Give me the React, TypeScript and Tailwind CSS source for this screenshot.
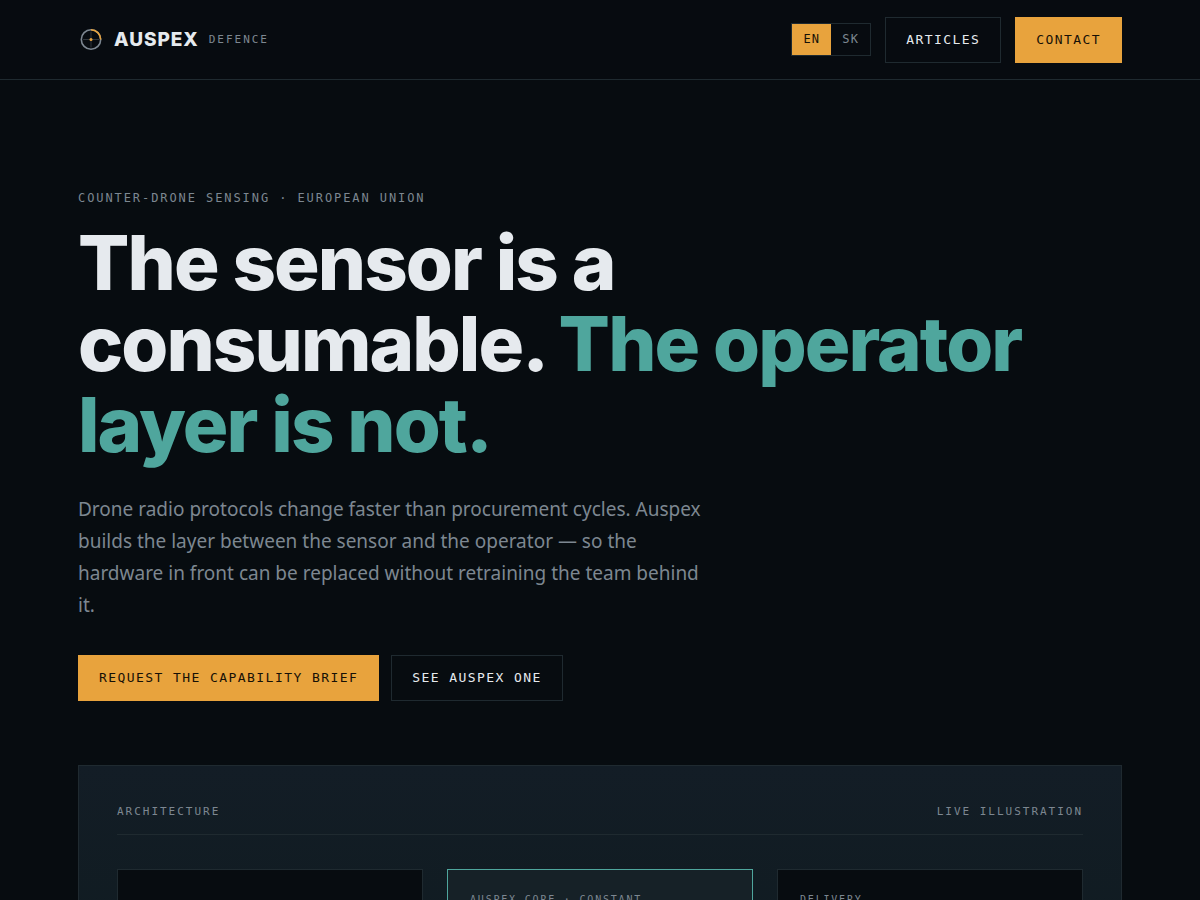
const card = "min-h-60 border px-[22px] pt-[22px]";
const cta = "inline-flex items-center border px-5 py-[13px] text-[13px] leading-[18px] tracking-[0.11em] uppercase";
const label = "text-[11px] leading-4 tracking-[0.18em] uppercase";

function Logo() {
  return (
    <svg viewBox="0 0 26 26" className="size-[26px]" fill="none" aria-hidden="true">
      <circle cx="13" cy="12.5" r="9.7" stroke="#7d8791" strokeWidth="1.6" />
      <path d="M13 4.5V20.5M5 12.5H21" stroke="#7d8791" strokeWidth="0.7" opacity="0.5" />
      <path d="M13 2.8A9.7 9.7 0 0 1 22.7 12.5" stroke="#e8a33d" strokeWidth="1.6" />
      <circle cx="13" cy="12.5" r="1.5" fill="#e8a33d" />
    </svg>
  );
}

export default function App() {
  return (
    <div className="h-screen overflow-x-hidden overflow-y-auto bg-[#070c10] font-['DejaVu_Sans_Mono',monospace] text-[#e6eaee]">
      <header className="border-b border-[#1f2a30] bg-[#070b10] px-[6.5vw] py-4">
        <div className="flex min-h-[47px] items-center justify-between">
          <a href="#top" className="flex items-center gap-[10px]">
            <Logo />
            <span className="font-['Inter',sans-serif] text-[19px] leading-6 font-extrabold tracking-wider">AUSPEX</span>
            <span className="text-[11px] leading-4 tracking-[0.18em] text-[#7d8791]">DEFENCE</span>
          </a>
          <nav className="flex items-center gap-[14px]">
            <div className="flex border border-[#1f2a30] text-[12px] leading-[15px] tracking-widest">
              <button type="button" className="bg-[#e8a33d] px-[11px] py-2 text-[#161006]">EN</button>
              <button type="button" className="px-[11px] py-2 text-[#7d8791]">SK</button>
            </div>
            <a href="#articles" className={`${cta} border-[#1f2a30]`}>Articles</a>
            <a href="#contact" className={`${cta} border-[#e8a33d] bg-[#e8a33d] text-[#161006]`}>Contact</a>
          </nav>
        </div>
      </header>
      <main id="top" className="px-[6.5vw] pt-[110px]">
        <p className="text-[12px] leading-4 tracking-[0.16em] text-[#7d8791]">COUNTER-DRONE SENSING · EUROPEAN UNION</p>
        <h1 className="mt-4 max-w-[1000px] font-['Inter',sans-serif] text-[76px] leading-[81px] font-extrabold tracking-tight">
          The sensor is a consumable. <span className="text-[#4fa69d]">The operator layer is not.</span>
        </h1>
        <p className="mt-7 max-w-[640px] font-['Noto_Sans',sans-serif] text-[19px] leading-8 text-[#7d8791]">
          Drone radio protocols change faster than procurement cycles. Auspex builds the layer between the sensor and the operator — so the hardware in front can be replaced without retraining the team behind it.
        </p>
        <div className="mt-[34px] flex flex-wrap gap-3">
          <a href="#brief" className={`${cta} border-[#e8a33d] bg-[#e8a33d] text-[#161006]`}>Request the capability brief</a>
          <a href="#one" className={`${cta} border-[#1f2a30]`}>See Auspex One</a>
        </div>
        <section className="mt-16 border border-[#1f2a30] bg-linear-to-b from-[#131d26] to-[#0d1a1c] p-[38px]">
          <div className="flex justify-between border-b border-[#1f2a30] pb-[14px] text-[#7d8791]">
            <h2 className={label}>Architecture</h2>
            <span className={label}>Live illustration</span>
          </div>
          <div className="mt-[34px] grid grid-cols-3 gap-6 text-[10px] leading-4 tracking-[0.18em] text-[#7d8791]">
            <div className={`${card} border-[#1f2a30] bg-[#070c10]`} />
            <div className={`${card} border-[#4fa69d] bg-[#162127]`}>AUSPEX CORE · CONSTANT</div>
            <div className={`${card} border-[#1f2a30] bg-[#070c10]`}>DELIVERY</div>
          </div>
        </section>
      </main>
    </div>
  );
}
